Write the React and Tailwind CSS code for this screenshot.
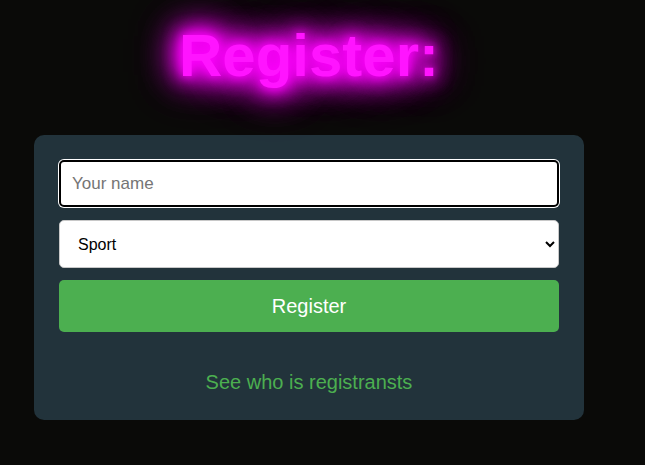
import React from 'react';

const App = () => {
    const [name, setName] = React.useState('');
    const [category, setCategory] = React.useState('Sport');

    return (
        <div className="min-h-[465px] w-full bg-[#0a0a08] font-['Liberation_Sans',Arial,sans-serif]">
            <div className="ml-[34px] w-[550px] pt-[21px]">
                <h1 className="text-center text-[60px] font-bold leading-[69px] text-[#ff14ff] [text-shadow:0_0_10px_#ff00ff,0_0_20px_#ff00ff,0_0_20px_#ff00ff,0_0_30px_#ff00ff,0_0_40px_#ff00ff,0_0_40px_#e000e0,0_0_50px_#b000b0]">
                    Register:
                </h1>

                <div className="mt-[45px] rounded-[10px] bg-[#22333b] px-[25px] pb-[17px] pt-[25px]">
                    <input
                        autoFocus
                        type="text"
                        value={name}
                        onChange={(e) => setName(e.target.value)}
                        placeholder="Your name"
                        className="block h-[47px] w-full rounded-[5px] border-2 border-black bg-white px-[11px] text-[17px] text-black caret-black shadow-[0_0_0_1px_#fff] outline-none placeholder:text-[#757575]"
                    />
                    <select
                        value={category}
                        onChange={(e) => setCategory(e.target.value)}
                        className="mt-[13px] block h-[48px] w-full rounded-[5px] border border-[#c8c8c8] bg-white pl-[14px] pr-[8px] text-[16px] text-black"
                    >
                        <option>Sport</option>
                        <option>Music</option>
                        <option>Art</option>
                    </select>
                    <button className="mt-[12px] block h-[52px] w-full rounded-[5px] bg-[#4caf50] text-[20px] text-white">
                        Register
                    </button>
                    <p className="mt-[29px] text-center text-[20px] leading-[42px] text-[#4caf50]">
                        See who is registransts
                    </p>
                </div>
            </div>
        </div>
    );
};

export default App;
